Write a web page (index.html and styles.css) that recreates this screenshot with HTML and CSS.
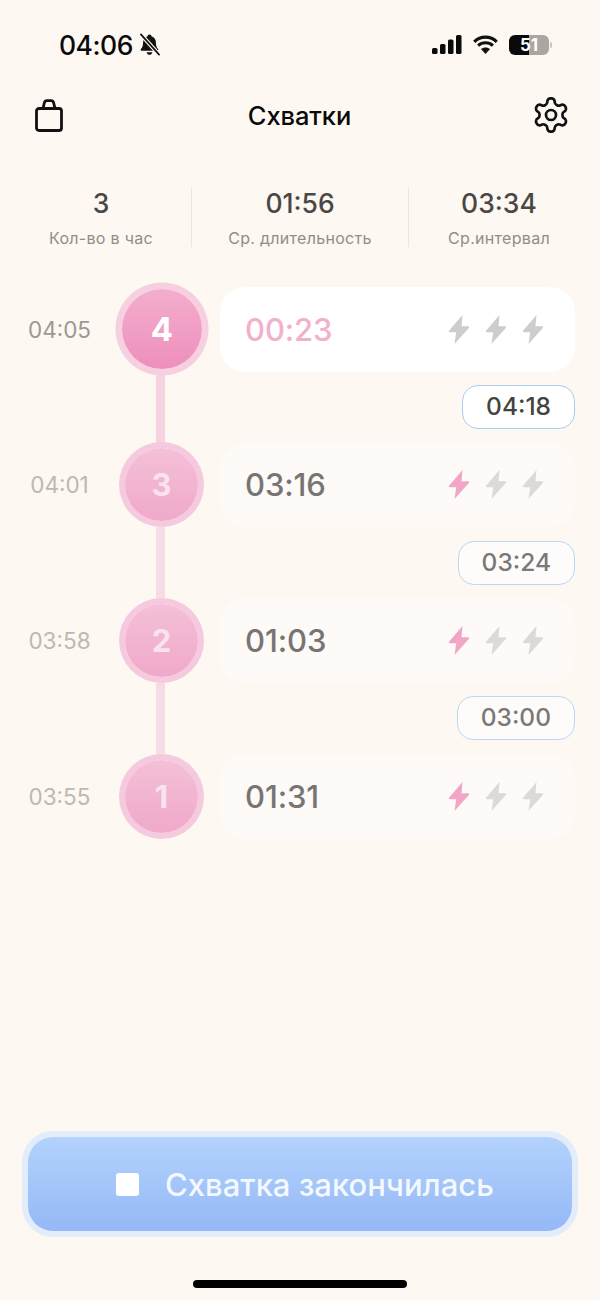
FILE: index.html
```html
<!DOCTYPE html>
<html lang="ru">
<head>
<meta charset="utf-8">
<title>Схватки</title>
<link rel="stylesheet" href="styles.css">
</head>
<body>
<main class="screen">
  <div class="status">
    <div class="status-left">
      <span class="clock">04:06</span>
      <svg class="bell" viewBox="0 0 24 24"><path d="M12 1.500c-1.200 0-2 .8-2 1.900C6.800 4.300 5.300 7 5.300 10.200c0 3.300-.8 5-2.300 6.600-.6.700-.2 1.700.8 1.700h16.400c1 0 1.400-1 .8-1.700-1.500-1.600-2.300-3.300-2.300-6.600C18.700 7 17.200 4.300 14 3.400c0-1.100-.8-1.900-2-1.900zM9 20c.2 1.500 1.400 2.700 3 2.700s2.800-1.200 3-2.700z" fill="#111"/><path d="M3 1.500 22 22.500" stroke="#fdf8f2" stroke-width="4.200"/><path d="M3 1.500 22 22.500" stroke="#111" stroke-width="1.800" stroke-linecap="round"/></svg>
    </div>
    <div class="status-right">
      <svg class="signal" viewBox="0 0 30 19"><rect x="0" y="13" width="5.500" height="6" rx="1.500"/><rect x="8" y="9" width="5.500" height="10" rx="1.500"/><rect x="16" y="4.500" width="5.500" height="14.500" rx="1.500"/><rect x="24" y="0" width="5.500" height="19" rx="1.500"/></svg>
      <svg class="wifi" viewBox="0 0 24 18"><path d="M1.200 6.400C7.300.5 16.700.5 22.800 6.400M4.900 10.100c4-3.700 10.200-3.700 14.200 0" fill="none" stroke="#111" stroke-width="3"/><path d="M12 18 7.600 13.300c2.500-2 6.300-2 8.800 0z" fill="#111"/></svg>
      <div class="battery"><span class="battery-level">51</span><span class="battery-cap"></span></div>
    </div>
  </div>

  <header class="header">
    <svg class="bag" viewBox="0 0 28 33"><path d="M4 9.500h20a2.500 2.500 0 0 1 2.500 2.500v17a2.500 2.500 0 0 1-2.500 2.500H4A2.500 2.500 0 0 1 1.500 29V12A2.500 2.500 0 0 1 4 9.500zM8 9.500l1.300-5.500c.3-1.300 1.200-2.300 2.700-2.300h4c1.500 0 2.400 1 2.700 2.300L20 9.500" fill="none" stroke="#111" stroke-width="2.800" stroke-linejoin="round"/></svg>
    <h1 class="title">Схватки</h1>
    <svg class="gear" viewBox="0 0 24 24"><path d="M12.220 2h-.44a2 2 0 0 0-2 2v.18a2 2 0 0 1-1 1.730l-.43.25a2 2 0 0 1-2 0l-.15-.08a2 2 0 0 0-2.730.73l-.22.38a2 2 0 0 0 .73 2.730l.15.1a2 2 0 0 1 1 1.720v.51a2 2 0 0 1-1 1.740l-.15.09a2 2 0 0 0-.73 2.730l.22.38a2 2 0 0 0 2.730.73l.15-.08a2 2 0 0 1 2 0l.43.25a2 2 0 0 1 1 1.730V20a2 2 0 0 0 2 2h.44a2 2 0 0 0 2-2v-.18a2 2 0 0 1 1-1.730l.43-.25a2 2 0 0 1 2 0l.15.08a2 2 0 0 0 2.730-.73l.22-.39a2 2 0 0 0-.73-2.730l-.15-.08a2 2 0 0 1-1-1.740v-.5a2 2 0 0 1 1-1.740l.15-.09a2 2 0 0 0 .73-2.730l-.22-.38a2 2 0 0 0-2.730-.73l-.15.08a2 2 0 0 1-2 0l-.43-.25a2 2 0 0 1-1-1.730V4a2 2 0 0 0-2-2z" fill="none" stroke="#111" stroke-width="1.600"/><circle cx="12" cy="12" r="3" fill="none" stroke="#111" stroke-width="1.600"/></svg>
  </header>

  <section class="stats">
    <div class="stat stat-side"><b class="stat-value">3</b><span class="stat-label">Кол-во в час</span></div>
    <div class="stat stat-mid"><b class="stat-value">01:56</b><span class="stat-label">Ср. длительность</span></div>
    <div class="stat stat-side"><b class="stat-value">03:34</b><span class="stat-label">Ср.интервал</span></div>
  </section>

  <section class="list">
    <div class="row row-active">
      <span class="time">04:05</span>
      <div class="node"><div class="circle">4</div></div>
      <div class="card"><span class="duration">00:23</span>
        <div class="bolts">
          <svg class="bolt" viewBox="0 0 22 31"><path d="M14.500 1 1.200 16.500c-.7.900-.4 1.700.7 1.700h6.300L6.500 30 20.800 14c.7-.9.400-1.700-.7-1.700h-6.600z"/></svg>
          <svg class="bolt" viewBox="0 0 22 31"><path d="M14.500 1 1.200 16.500c-.7.900-.4 1.700.7 1.700h6.300L6.500 30 20.800 14c.7-.9.400-1.700-.7-1.700h-6.600z"/></svg>
          <svg class="bolt" viewBox="0 0 22 31"><path d="M14.500 1 1.200 16.500c-.7.900-.4 1.700.7 1.700h6.300L6.500 30 20.800 14c.7-.9.400-1.700-.7-1.700h-6.600z"/></svg>
        </div>
      </div>
    </div>
    <div class="link link-active"><span class="line"></span><span class="pill">04:18</span></div>
    <div class="row">
      <span class="time">04:01</span>
      <div class="node"><div class="circle">3</div></div>
      <div class="card"><span class="duration">03:16</span>
        <div class="bolts">
          <svg class="bolt bolt-on" viewBox="0 0 22 31"><path d="M14.500 1 1.200 16.500c-.7.900-.4 1.700.7 1.700h6.300L6.500 30 20.800 14c.7-.9.400-1.700-.7-1.700h-6.600z"/></svg>
          <svg class="bolt" viewBox="0 0 22 31"><path d="M14.500 1 1.200 16.500c-.7.900-.4 1.700.7 1.700h6.300L6.500 30 20.800 14c.7-.9.400-1.700-.7-1.700h-6.600z"/></svg>
          <svg class="bolt" viewBox="0 0 22 31"><path d="M14.500 1 1.200 16.500c-.7.900-.4 1.700.7 1.700h6.300L6.500 30 20.800 14c.7-.9.400-1.700-.7-1.700h-6.600z"/></svg>
        </div>
      </div>
    </div>
    <div class="link"><span class="line"></span><span class="pill">03:24</span></div>
    <div class="row">
      <span class="time">03:58</span>
      <div class="node"><div class="circle">2</div></div>
      <div class="card"><span class="duration">01:03</span>
        <div class="bolts">
          <svg class="bolt bolt-on" viewBox="0 0 22 31"><path d="M14.500 1 1.200 16.500c-.7.900-.4 1.700.7 1.700h6.300L6.500 30 20.800 14c.7-.9.400-1.700-.7-1.700h-6.600z"/></svg>
          <svg class="bolt" viewBox="0 0 22 31"><path d="M14.500 1 1.200 16.500c-.7.900-.4 1.700.7 1.700h6.300L6.500 30 20.800 14c.7-.9.400-1.700-.7-1.700h-6.600z"/></svg>
          <svg class="bolt" viewBox="0 0 22 31"><path d="M14.500 1 1.200 16.500c-.7.900-.4 1.700.7 1.700h6.300L6.500 30 20.800 14c.7-.9.400-1.700-.7-1.700h-6.600z"/></svg>
        </div>
      </div>
    </div>
    <div class="link"><span class="line"></span><span class="pill">03:00</span></div>
    <div class="row">
      <span class="time">03:55</span>
      <div class="node"><div class="circle">1</div></div>
      <div class="card"><span class="duration">01:31</span>
        <div class="bolts">
          <svg class="bolt bolt-on" viewBox="0 0 22 31"><path d="M14.500 1 1.200 16.500c-.7.900-.4 1.700.7 1.700h6.300L6.500 30 20.800 14c.7-.9.400-1.700-.7-1.700h-6.600z"/></svg>
          <svg class="bolt" viewBox="0 0 22 31"><path d="M14.500 1 1.200 16.500c-.7.900-.4 1.700.7 1.700h6.300L6.500 30 20.800 14c.7-.9.400-1.700-.7-1.700h-6.600z"/></svg>
          <svg class="bolt" viewBox="0 0 22 31"><path d="M14.500 1 1.200 16.500c-.7.900-.4 1.700.7 1.700h6.300L6.500 30 20.800 14c.7-.9.400-1.700-.7-1.700h-6.600z"/></svg>
        </div>
      </div>
    </div>
  </section>

  <button class="action" type="button"><span class="stop"></span><span>Схватка закончилась</span></button>
  <div class="home"></div>
</main>
</body>
</html>
```
FILE: styles.css
```css
* { box-sizing: border-box; }
html, body { margin: 0; padding: 0; }
body {
  background: #fdf8f2;
  font-family: Inter, "Noto Sans", sans-serif;
  color: #111;
  overflow: hidden;
}
.screen {
  height: 1300px;
  display: flex;
  flex-direction: column;
}

/* status bar */
.status {
  height: 88px;
  display: flex;
  justify-content: space-between;
  align-items: center;
  padding: 1px 51px 0 59px;
}
.status-left { display: flex; align-items: center; gap: 5px; }
.clock { font-size: 26.500px; font-weight: 550; line-height: 32px; letter-spacing: -.5px; color: #0a0a0a; }
.bell { width: 23px; height: 23px; }
.status-right { display: flex; align-items: center; }
.signal { width: 30px; height: 19px; fill: #0a0a0a; }
.wifi { width: 25px; height: 19px; margin-left: 11px; }
.battery {
  position: relative;
  width: 40px;
  height: 20px;
  margin-left: 11px;
  border-radius: 6px;
  background: linear-gradient(90deg, #0a0a0a 51%, #aaa6a1 51%);
  color: #fff;
  font-size: 17px;
  font-weight: 700;
  line-height: 20px;
  text-align: center;
}
.battery-cap {
  position: absolute;
  right: -3px;
  top: 7px;
  width: 2px;
  height: 6px;
  border-radius: 0 2px 2px 0;
  background: #c8c5c0;
}

/* header */
.header {
  height: 54px;
  display: flex;
  align-items: center;
  justify-content: space-between;
  padding: 0 29px 0 35px;
}
.bag { width: 28px; height: 33px; }
.title { margin: 0 0 0 5px; font-size: 25.500px; font-weight: 550; letter-spacing: -.1px; color: #0a0a0a; }
.gear { width: 40px; height: 40px; margin-top: -1px; }

/* stats */
.stats {
  display: flex;
  margin-top: 46px;
  padding: 0 11px;
  height: 59px;
}
.stat {
  display: flex;
  flex-direction: column;
  align-items: center;
}
.stat-side { width: 180px; }
.stat-mid {
  width: 218px;
  border-left: 1px solid #ebe6e0;
  border-right: 1px solid #ebe6e0;
}
.stat-value { font-size: 26.500px; font-weight: 550; line-height: 31px; color: #4a4745; }
.stat-label { margin-top: 7.500px; font-size: 16px; line-height: 22px; letter-spacing: .3px; color: #918d8a; }

/* timeline */
.list { display: flex; flex-direction: column; margin-top: 40px; padding-right: 25px; }
.row {
  display: grid;
  grid-template-columns: 119px 85px 1fr;
  height: 84.670px;
  align-items: center;
}
.time { justify-self: center; font-size: 22.500px; color: #bcb8b3; }
.row-active .time { color: #9c9894; }
.node { position: relative; z-index: 1; display: flex; justify-content: center; }
.circle {
  width: 73px;
  height: 73px;
  border-radius: 50%;
  display: flex;
  align-items: center;
  justify-content: center;
  background: linear-gradient(180deg, #f4c0d8, #f0a9c9);
  box-shadow: 0 0 0 6px #f5c9de;
  color: #f9e3ee;
  font-size: 31px;
  font-weight: 700;
}
.row-active .circle {
  width: 80px;
  height: 80px;
  flex: none;
  margin: 0 -3px 0 -2px;
  background: linear-gradient(180deg, #f3aecd, #ee8fba);
  box-shadow: 0 0 0 6.500px #f6cfe1;
  color: #fff;
  font-size: 33px;
}
.card {
  margin-left: 16px;
  height: 84.670px;
  border-radius: 25px;
  background: #fdfaf8;
  display: flex;
  align-items: center;
  justify-content: space-between;
  padding: 0 31px 0 25px;
}
.row-active .card { background: #fff; }
.duration { font-size: 31px; font-weight: 550; letter-spacing: -.1px; color: #777573; }
.row-active .duration { color: #f2b0cc; }
.bolts { display: flex; gap: 15px; }
.bolt { width: 22px; height: 31px; fill: #dcdad8; display: block; }
.row-active .bolt { fill: #cfcdcb; }
.bolt.bolt-on { fill: #f1a6c6; }
.link {
  height: 71px;
  display: flex;
  align-items: center;
  justify-content: space-between;
}
.line { width: 9px; height: 71px; margin-left: 156px; background: #f7dce8; }
.link-active .line { background: #f6d3e3; }
.pill {
  height: 44px;
  padding: 0 23px;
  border: 1.500px solid #b9d8f3;
  border-radius: 16px;
  background: #fefcfa;
  font-size: 24.500px;
  font-weight: 550;
  line-height: 41px;
  color: #7a7876;
}
.link-active .pill { background: #fff; border-color: #a9cdee; color: #45433f; }

/* action */
.action {
  margin: auto 28px 0;
  height: 94px;
  border: none;
  border-radius: 25px;
  background: linear-gradient(180deg, #b3d3fc, #95b8f7);
  box-shadow: 0 0 0 6px #e2ecfb;
  color: #f4f8ff;
  font-family: inherit;
  font-size: 31px;
  font-weight: 500;
  display: flex;
  align-items: center;
  justify-content: center;
  gap: 26px;
  padding: 0 0 0 10px;
}
.stop { width: 23px; height: 23px; border-radius: 3px; background: #fff; }
.home {
  flex: none;
  width: 214px;
  height: 8px;
  margin: 49px auto 12px;
  border-radius: 4px;
  background: #000;
}
```
